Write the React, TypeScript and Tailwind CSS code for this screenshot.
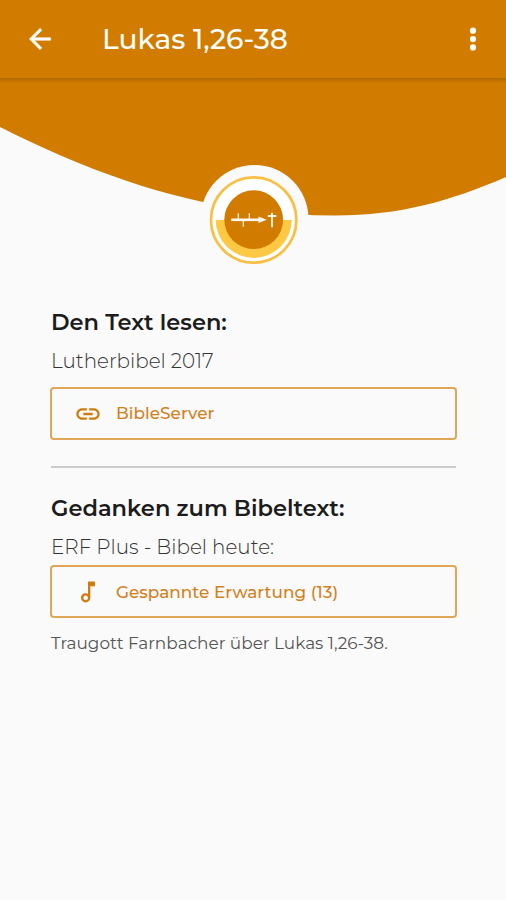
import type { ReactNode } from 'react';

function BackArrow() {
  return (
    <svg className="h-8 w-8" viewBox="0 0 24 24" fill="#fffdf8" stroke="#fffdf8" strokeWidth="0.4">
      <path d="M20 11H7.83l5.59-5.59L12 4l-8 8 8 8 1.41-1.41L7.83 13H20v-2z" />
    </svg>
  );
}

function MoreDots() {
  return (
    <svg className="h-8 w-8" viewBox="0 0 32 32" fill="#fffdf8">
      <circle cx="16" cy="7.7" r="3.1" />
      <circle cx="16" cy="16.1" r="3.1" />
      <circle cx="16" cy="24.4" r="3.1" />
    </svg>
  );
}

function LinkIcon() {
  return (
    <svg className="h-7 w-7" viewBox="0 0 24 24" fill="#d07c0c">
      <path d="M3.9 12c0-1.71 1.39-3.1 3.1-3.1h4V7H7c-2.76 0-5 2.24-5 5s2.24 5 5 5h4v-1.9H7c-1.71 0-3.1-1.39-3.1-3.1zM8 13h8v-2H8v2zm9-6h-4v1.9h4c1.71 0 3.1 1.39 3.1 3.1s-1.39 3.1-3.1 3.1h-4V17h4c2.76 0 5-2.24 5-5s-2.24-5-5-5z" />
    </svg>
  );
}

function NoteIcon() {
  return (
    <svg className="h-7 w-7" viewBox="0 0 24 24" fill="#d07c0c">
      <path d="M12 3l.01 10.55c-.59-.34-1.27-.55-2-.55C7.79 13 6 14.79 6 17s1.79 4 4.01 4S14 19.21 14 17V7h4V3h-6zm-1.99 16c-1.1 0-2-.9-2-2s.9-2 2-2 2 .9 2 2-.9 2-2 2z" />
    </svg>
  );
}

function Hero() {
  return (
    <svg className="block h-[196px] w-full" viewBox="0 78 506 196">
      <defs>
        <linearGradient id="barShadow" x1="0" y1="0" x2="0" y2="1">
          <stop offset="0" stopColor="#b06800" />
          <stop offset="0.5" stopColor="#c27100" />
          <stop offset="1" stopColor="#d17b00" />
        </linearGradient>
      </defs>
      <path d="M0 78H506V177C450 201 400 215.5 335 215.5C210 215.5 110 182 0 127Z" fill="#d17b00" />
      <rect y="78" width="506" height="5" fill="url(#barShadow)" />
      <circle cx="254.5" cy="219" r="54" fill="#fafafa" />
      <circle cx="253.7" cy="220" r="42.7" fill="#fff" stroke="#f9bf43" strokeWidth="2.7" />
      <path d="M215.7 220H291.7A38 38 0 0 1 215.7 220Z" fill="#fdc844" />
      <circle cx="253.7" cy="219.7" r="29.4" fill="#d17b00" />
      <g stroke="#fffaf0" fill="none">
        <path d="M231.3 219.8H260" strokeWidth="2.6" />
        <path d="M238.3 213.2V219M249.3 213.2V219M243.3 220V226.8" strokeWidth="1.2" />
        <path d="M272 212.8V227.3M267.8 216H276.3" strokeWidth="1.8" />
      </g>
      <path d="M258.5 216.6L266.8 219.8L258.5 223Z" fill="#fffaf0" />
    </svg>
  );
}

function LinkButton({ icon, children }: { icon: ReactNode; children: ReactNode }) {
  return (
    <button className="flex h-[53px] w-[407px] items-center rounded-[4px] border-2 border-[#dfa658] pl-[21.6px] text-left text-[16.9px] font-medium text-[#d3811d]">
      <span className="mr-[14.4px] flex">{icon}</span>
      {children}
    </button>
  );
}

export default function App() {
  return (
    <div className="h-[900px] w-full overflow-hidden bg-[#fafafa] font-['Montserrat','Inter',sans-serif]">
      <header className="flex h-[78px] items-center bg-[#d17b00] pl-6 pr-[17px]">
        <BackArrow />
        <h1 className="ml-[46px] flex-1 whitespace-nowrap text-[28.1px] font-medium leading-8 text-[#fffdf8]">
          Lukas 1,26-38
        </h1>
        <MoreDots />
      </header>
      <Hero />
      <main className="flex flex-col items-start whitespace-nowrap pl-[50px] pt-[34px] text-[#555]">
        <h2 className="pl-px text-[22.5px] font-semibold leading-7 text-[#1c1c1c]">
          Den Text lesen:
        </h2>
        <p className="mt-[11px] pl-px text-[19.9px] font-light leading-7 text-[#333]">Lutherbibel 2017</p>
        <div className="mt-[12px]">
          <LinkButton icon={<LinkIcon />}>
            <span>BibleServer</span>
          </LinkButton>
        </div>
        <hr className="mb-[26px] ml-px mt-[26px] w-[405px] border-t-2 border-[#cbcbcb]" />
        <h2 className="pl-px text-[22.55px] font-semibold leading-7 text-[#1c1c1c]">
          Gedanken zum Bibeltext:
        </h2>
        <p className="mt-[11px] pl-px text-[19.9px] font-light leading-7 text-[#333]">ERF Plus - Bibel heute:</p>
        <div className="mt-[4px]">
          <LinkButton icon={<NoteIcon />}>
            <span className="pt-0.5">Gespannte Erwartung (13)</span>
          </LinkButton>
        </div>
        <p className="mt-[11px] pl-px text-[16.9px] leading-7">
          Traugott Farnbacher über Lukas 1,26-38.
        </p>
      </main>
    </div>
  );
}
